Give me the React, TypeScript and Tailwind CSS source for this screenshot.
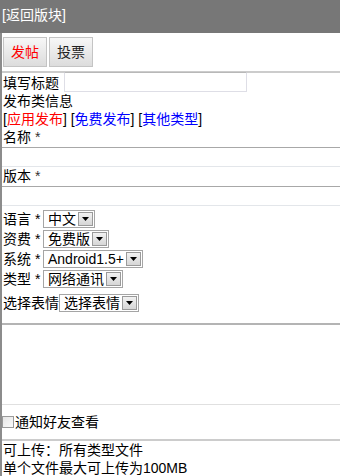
import React from "react";

function Select({ label }: { label: string }) {
  return (
    <span className="inline-flex items-stretch h-[18px] border border-[#a5a5a5] bg-white">
      <span className="pl-[4px] pr-[2px] leading-[16px] whitespace-nowrap">{label}</span>
      <span className="w-[15px] my-[1px] mr-[1px] border border-[#9a9a9a] bg-gradient-to-b from-[#f2f2f2] to-[#d6d6d6] flex items-center justify-center">
        <svg width="7" height="4" viewBox="0 0 7 4">
          <path d="M0 0 H7 L3.5 4 Z" fill="#000" />
        </svg>
      </span>
    </span>
  );
}

export default function App() {
  return (
    <div
      className="w-[340px] h-[476px] overflow-hidden bg-white text-[14px] leading-[18px] text-black"
      style={{ fontFamily: '"Liberation Sans","Noto Sans CJK SC",sans-serif' }}
    >
      <div className="h-[33px] bg-[#777777] text-white flex items-center pl-[2px] pb-[3px]">[返回版块]</div>
      <div className="border-l-2 border-[#8c8c8c]">
        <div className="pt-[4px] pl-[1px] flex gap-[2px]">
          <button className="w-[44px] h-[30px] border border-[#c4c4c4] bg-gradient-to-b from-[#f7f7f7] to-[#dcdcdc] text-[#ff0000] text-[14px]">发帖</button>
          <button className="w-[44px] h-[30px] border border-[#c4c4c4] bg-gradient-to-b from-[#f7f7f7] to-[#dcdcdc] text-[#222] text-[14px]">投票</button>
        </div>
        <div className="mt-[4px] border-t-2 border-[#cccccc]">
          <div className="flex items-center h-[19px] pl-[1px]">
            <span>填写标题</span>
            <span className="ml-[5px] -mt-[2px] w-[183px] h-[20px] border border-[#dedee6] border-t-[#b8b8b8] bg-white" />
          </div>
          <div className="pl-[1px] h-[18px]">发布类信息</div>
          <div className="pl-[1px] h-[18px] whitespace-nowrap">
            [<span className="text-[#ff0000]">应用发布</span>] [<span className="text-[#0000ff]">免费发布</span>] [<span className="text-[#0000ff]">其他类型</span>]
          </div>
          <div className="pl-[1px] h-[19px]">名称 <span className="text-[#333]">*</span></div>
          <div className="h-[20px] border-t border-b border-t-[#a8a8a8] border-b-[#e3e6ea] bg-white" />
          <div className="pl-[1px] h-[19px]">版本 <span className="text-[#333]">*</span></div>
          <div className="h-[20px] border-t border-b border-t-[#a8a8a8] border-b-[#e3e6ea] bg-white" />
          <div className="pt-[3px] pl-[1px] flex flex-col gap-[1px]">
            <div className="flex items-center h-[19px]">
              <span className="w-[40px]">语言 *</span>
              <Select label="中文" />
            </div>
            <div className="flex items-center h-[19px]">
              <span className="w-[40px]">资费 *</span>
              <Select label="免费版" />
            </div>
            <div className="flex items-center h-[19px]">
              <span className="w-[40px]">系统 *</span>
              <Select label="Android1.5+" />
            </div>
            <div className="flex items-center h-[19px]">
              <span className="w-[40px]">类型 *</span>
              <Select label="网络通讯" />
            </div>
            <div className="flex items-center h-[20px] mt-[4px]">
              <span className="w-[56px]">选择表情</span>
              <Select label="选择表情" />
            </div>
          </div>
          <div className="mt-[10px] h-[82px] border-t-2 border-b border-t-[#b4b4b4] border-b-[#e0e0e0] bg-white" />
          <div className="h-[34px] flex items-center">
            <span className="w-[12px] h-[12px] border border-[#9a9a9a] bg-gradient-to-br from-[#e6e6e6] to-[#fafafa]" />
            <span className="ml-[1px]">通知好友查看</span>
          </div>
          <div className="border-t-2 border-[#cccccc]">
            <div className="pl-[1px] h-[18px]">可上传：所有类型文件</div>
            <div className="pl-[1px] h-[18px] whitespace-nowrap">单个文件最大可上传为100MB</div>
          </div>
        </div>
      </div>
    </div>
  );
}
